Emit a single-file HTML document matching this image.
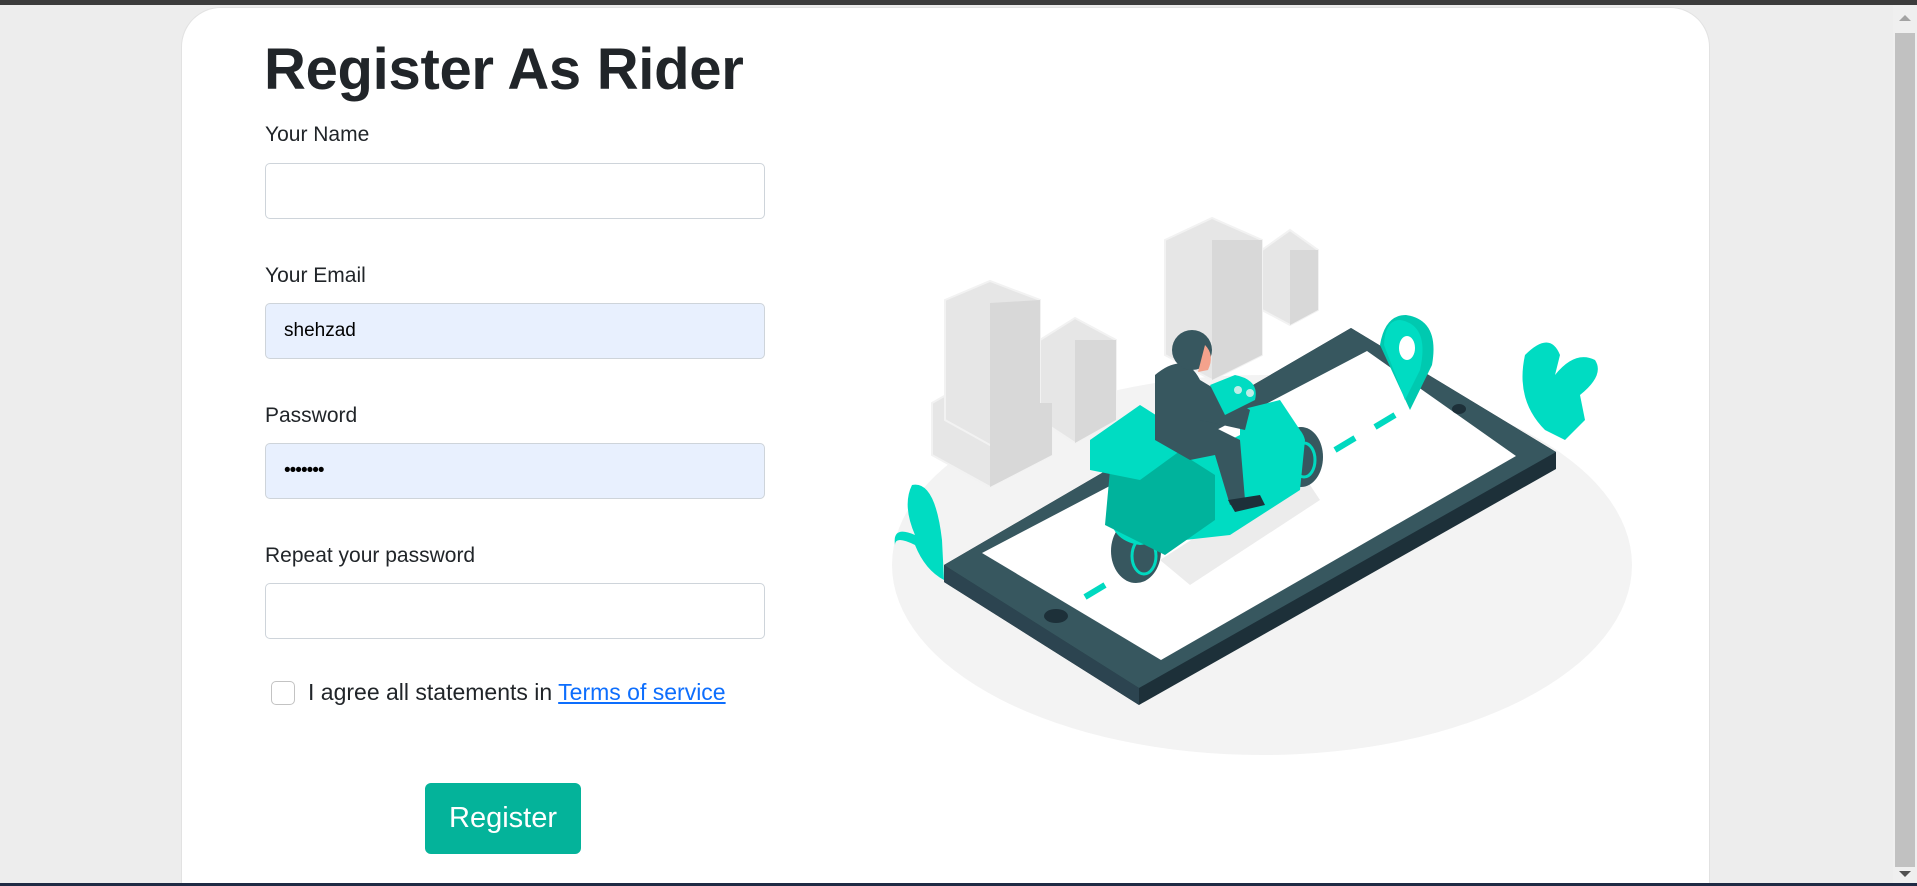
<!DOCTYPE html>
<html><head><meta charset="utf-8"><style>
html,body{margin:0;padding:0;overflow:hidden}
body{width:1917px;height:886px;background:#ededed;position:relative;overflow:hidden;font-family:"Liberation Sans",sans-serif;color:#212529}
.top{position:absolute;left:0;top:0;width:1917px;height:5px;background:#3c3c3c}
.bot{position:absolute;left:0;top:883px;width:1917px;height:3px;background:#1f2a44}
.card{position:absolute;left:181px;top:7px;width:1527px;height:876px;background:#fff;border-radius:40px 40px 0 0;border:1px solid #e2e2e2;border-bottom:none}
.sb{position:absolute;left:1893px;top:5px;width:24px;height:878px;background:#efefef}
.thumb{position:absolute;left:1895px;top:33px;width:20px;height:834px;background:#c1c1c1}
h1{position:absolute;left:264px;top:36px;margin:0;font-size:58px;font-weight:bold;letter-spacing:-0.3px;color:#212529}
.lbl{position:absolute;left:265px;font-size:21px;color:#212529}
.inp{position:absolute;left:265px;width:498px;height:54px;border:1px solid #ced4da;border-radius:5px;background:#fff}
.fill{background:#e8f0fe}
.val{position:absolute;left:18px;top:16px;font-size:19px;color:#000}
.cb{position:absolute;left:271px;top:681px;width:22px;height:22px;border:1px solid #c3c3c3;border-radius:5px}
.agree{position:absolute;left:308px;top:679px;font-size:23px;color:#212529}
.agree a{color:#0d6efd;text-decoration:underline}
.btn{position:absolute;left:425px;top:783px;width:156px;height:71px;background:#04b39a;border-radius:6px;color:#fff;font-size:29px;text-align:center;line-height:71px}
svg{position:absolute;left:0;top:0}
</style></head><body>
<div class="top"></div>
<div class="card"></div>
<h1>Register As Rider</h1>
<div class="lbl" style="top:123px">Your Name</div>
<div class="inp" style="top:163px"></div>
<div class="lbl" style="top:264px">Your Email</div>
<div class="inp fill" style="top:303px"><span class="val">shehzad</span></div>
<div class="lbl" style="top:404px">Password</div>
<div class="inp fill" style="top:443px"><span class="val" style="top:16px;letter-spacing:-1px">•••••••</span></div>
<div class="lbl" style="top:544px">Repeat your password</div>
<div class="inp" style="top:583px"></div>
<div class="cb"></div>
<div class="agree">I agree all statements in <a>Terms of service</a></div>
<div class="btn">Register</div>

<svg width="1917" height="886" viewBox="0 0 1917 886">
<ellipse cx="1262" cy="565" rx="370" ry="190" fill="#f3f3f3"/>
<g fill="#e6e6e6" stroke="#f2f2f2" stroke-width="2">
<polygon points="932,403 990,370 1052,403 1052,455 990,487 932,455"/>
<polygon points="945,300 990,281 1040,300 1040,420 990,445 945,420"/>
<polygon points="1040,340 1075,318 1116,340 1116,420 1075,443 1040,420"/>
<polygon points="1165,240 1212,218 1262,240 1262,355 1212,380 1165,355"/>
<polygon points="1262,250 1290,230 1318,250 1318,310 1290,325 1262,310"/>
</g>
<g fill="#d8d8d8"><polygon points="990,303 1040,300 1040,420 990,445"/><polygon points="1075,340 1116,340 1116,420 1075,443"/><polygon points="1212,240 1262,240 1262,355 1212,380"/><polygon points="1290,250 1318,250 1318,310 1290,325"/><polygon points="990,403 1052,403 1052,455 990,487"/></g>
<polygon points="944,565 1351,328 1556,452 1556,469 1139,705 944,582" fill="#1d3039"/>
<polygon points="944,565 1139,688 1139,705 944,582" fill="#2c4450"/>
<polygon points="944,565 1351,328 1556,452 1139,688" fill="#37575f"/>
<polygon points="982,553 1367,351 1516,456 1161,660" fill="#fff"/>
<ellipse cx="1056" cy="616" rx="12" ry="7" fill="#1d3039"/>
<ellipse cx="1459" cy="409" rx="7" ry="5" fill="#1d3039"/>
<g stroke="#00d9c0" stroke-width="6"><line x1="1085" y1="597" x2="1105" y2="585"/><line x1="1335" y1="450" x2="1355" y2="438"/><line x1="1375" y1="427" x2="1395" y2="415"/></g>
<polygon points="1160,560 1300,470 1320,500 1190,585" fill="#ececec"/>
<ellipse cx="1136" cy="551" rx="25" ry="32" fill="#37575f"/><ellipse cx="1144" cy="556" rx="12" ry="18" fill="none" stroke="#00d9c0" stroke-width="3"/>
<ellipse cx="1301" cy="457" rx="22" ry="30" fill="#37575f"/><ellipse cx="1304" cy="460" rx="11" ry="17" fill="none" stroke="#00d9c0" stroke-width="3"/>
<path d="M1110,500 L1270,420 Q1300,420 1305,440 L1300,490 L1230,535 L1140,545 Q1105,540 1110,500Z" fill="#00dcc2"/>
<path d="M1110,470 L1160,440 L1215,475 L1215,520 L1165,555 L1105,525Z" fill="#00b39c"/>
<path d="M1090,440 L1140,405 L1195,440 L1140,480 L1090,470Z" fill="#00dcc2"/>
<path d="M1240,410 L1280,400 L1300,430 L1270,470 L1240,470Z" fill="#00dcc2"/>
<path d="M1155,375 Q1185,350 1200,380 L1250,410 L1245,430 L1200,420 L1240,440 L1245,500 L1230,505 L1215,455 L1190,460 L1155,440Z" fill="#37575f"/>
<circle cx="1192" cy="350" r="20" fill="#37575f"/>
<path d="M1205,345 Q1215,355 1208,370 L1198,372Z" fill="#f4a28c"/>
<path d="M1210,385 L1235,375 Q1260,380 1255,400 L1225,415Z" fill="#00dcc2"/>
<circle cx="1238" cy="390" r="4" fill="#bfeee8"/><circle cx="1250" cy="393" r="4" fill="#bfeee8"/>
<path d="M1228,500 L1260,495 L1265,505 L1235,512Z" fill="#1d3039"/>
<path d="M1406,315 Q1440,320 1432,365 L1410,410 L1380,345 Q1385,315 1406,315Z" fill="#00c9b0"/>
<path d="M1400,320 Q1430,325 1420,370 L1405,400 L1384,345 Q1385,320 1400,320Z" fill="#00dcc2"/>
<ellipse cx="1407" cy="348" rx="8" ry="12" fill="#fff"/>
<path d="M912,485 Q935,480 942,540 L944,580 Q925,570 915,545 Q895,535 895,545 Q892,525 915,535 Q902,505 912,485Z" fill="#00dcc2"/>
<path d="M1525,355 Q1550,330 1560,355 L1555,375 Q1575,350 1595,360 Q1605,375 1580,395 L1585,420 L1565,440 L1545,430 Q1515,400 1525,355Z" fill="#00dcc2"/>
</svg>
<div class="sb"></div><div class="thumb"></div>
<svg width="1917" height="886"><polygon points="1899,21 1911,21 1905,15" fill="#a3a3a3"/><polygon points="1899,871 1911,871 1905,877" fill="#505050"/></svg>
<div class="bot"></div>
</body></html>
